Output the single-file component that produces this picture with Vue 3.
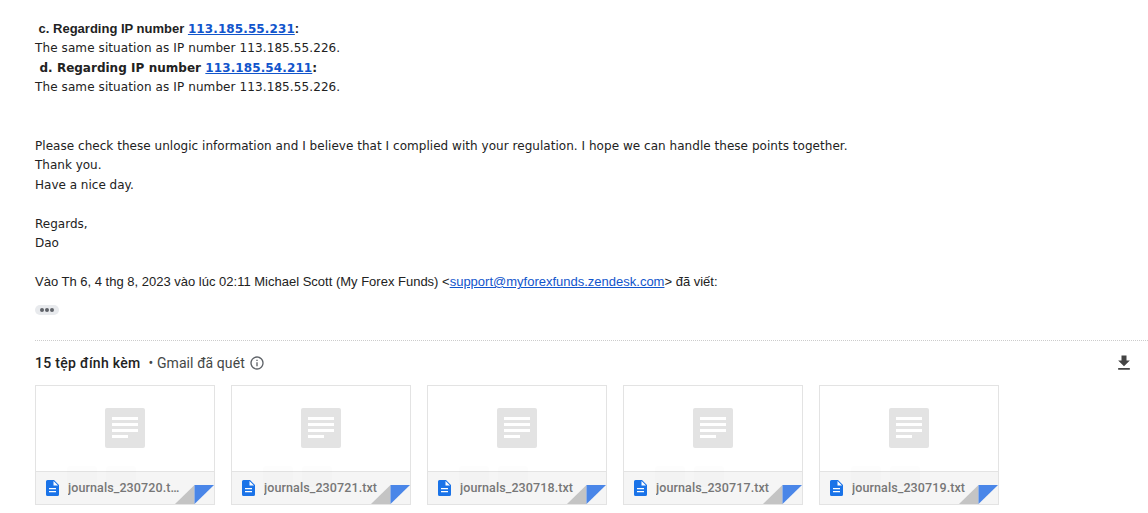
<script setup>
const files = [
  { name: 'journals_230720.txt', cut: true },
  { name: 'journals_230721.txt', cut: false },
  { name: 'journals_230718.txt', cut: false },
  { name: 'journals_230717.txt', cut: false },
  { name: 'journals_230719.txt', cut: false }
]
</script>

<template>
  <div class="page">
    <div class="mail">
      <div class="head-c">&nbsp;c. Regarding IP number <a class="ip" href="#">113.185.55.231</a>:</div>
      <div class="same">The same situation as IP number 113.185.55.226.</div>
      <div class="head-d">&nbsp;d. Regarding IP number <a class="ip" href="#">113.185.54.211</a>:</div>
      <div class="same">The same situation as IP number 113.185.55.226.</div>
      <div class="blank"></div>
      <div class="blank"></div>
      <div class="long">Please check these unlogic information and I believe that I complied with your regulation. I hope we can handle these points together.</div>
      <div>Thank you.</div>
      <div>Have a nice day.</div>
      <div class="blank"></div>
      <div>Regards,</div>
      <div>Dao</div>
    </div>
    <div class="quote">Vào Th 6, 4 thg 8, 2023 vào lúc 02:11 Michael Scott (My Forex Funds) &lt;<a href="#">support@myforexfunds.zendesk.com</a>&gt; đã viết:</div>
    <div class="dots"><i></i><i></i><i></i></div>
    <div class="divider"></div>
    <div class="att-head">
      <span class="count">15 tệp đính kèm</span>
      <span class="scan">•&nbsp;Gmail đã quét</span>
      <svg class="info" viewBox="0 0 24 24" width="16" height="16"><path fill="#5f6368" d="M11 7h2v2h-2zm0 4h2v6h-2zm1-9C6.48 2 2 6.48 2 12s4.48 10 10 10 10-4.48 10-10S17.52 2 12 2zm0 18c-4.41 0-8-3.59-8-8s3.59-8 8-8 8 3.59 8 8-3.59 8-8 8z"/></svg>
      <svg class="dl" viewBox="0 0 24 24" width="20" height="20"><path fill="#444" d="M19 9h-4V3H9v6H5l7 7 7-7zM5 18v2h14v-2H5z"/></svg>
    </div>
    <div class="chips">
      <div v-for="f in files" :key="f.name" class="chip">
        <div class="thumb">
          <svg viewBox="0 0 40 40" width="40" height="40">
            <rect width="40" height="40" rx="2" fill="#e3e3e3"/>
            <path fill="#fff" d="M7 9h26v3H7zM7 15h26v3H7zM7 21h26v3H7zM7 27h16v3H7z"/>
          </svg>
        </div>
        <div class="foot">
          <svg class="ficon" viewBox="0 0 13 16" width="13" height="16">
            <path fill="#1a73e8" d="M1.500 0H8l5 5v9.500a1.500 1.500 0 0 1-1.500 1.500h-10A1.500 1.500 0 0 1 0 14.500v-13A1.500 1.500 0 0 1 1.500 0z"/>
            <path fill="#fff" d="M3 8h7v1.200H3zM3 11h7v1.200H3zM7.500 1v4.500H12z" />
          </svg>
          <span class="name" :class="{ cut: f.cut }">{{ f.name }}</span>
          <svg class="corner" viewBox="0 0 40 20" width="39" height="19" preserveAspectRatio="none">
            <path fill="#c4c4c4" d="M0 20 L20 0 V20 Z"/>
            <path fill="#4a86e8" d="M20 0 H40 L20 20 Z"/>
          </svg>
        </div>
        <div class="ghosts"><span></span><span></span></div>
      </div>
    </div>
  </div>
</template>

<style scoped>
.page {
  width: 1148px;
  height: 513px;
  overflow: hidden;
  box-sizing: border-box;
  padding: 18.75px 0 0 35px;
  background: #fff;
  color: #222;
}
.mail {
  font-family: "DejaVu Sans", Verdana, sans-serif;
  font-size: 12px;
  line-height: 19.5px;
}
.blank { height: 19.5px; }
.same { letter-spacing: 0.1px; }
.long { letter-spacing: 0.037px; }
.head-c {
  font-family: "Liberation Sans", Arial, sans-serif;
  font-weight: 700;
  font-size: 13px;
}
.head-d { font-weight: 700; font-size: 12px; word-spacing: 0.2px; }
.ip {
  font-family: "DejaVu Sans", Verdana, sans-serif;
  color: #15c;
  text-decoration: underline;
  font-size: 12px;
  letter-spacing: 0.1px;
}
.quote {
  margin-top: 18.25px;
  font-family: "Liberation Sans", Arial, sans-serif;
  font-size: 13px;
  line-height: 20px;
}
.quote a { color: #15c; }
.dots {
  margin-top: 13px;
  width: 24px;
  height: 10px;
  border-radius: 5px;
  background: #e8eaed;
  display: flex;
  align-items: center;
  justify-content: center;
  gap: 1px;
}
.dots i {
  width: 4px;
  height: 4px;
  border-radius: 50%;
  background: #5f6368;
}
.divider {
  margin-top: 25px;
  width: 1113px;
  border-top: 1px dotted #ccc;
}
.att-head {
  display: flex;
  align-items: center;
  height: 22px;
  margin-top: 11px;
  width: 1099px;
  font-family: Roboto, "Liberation Sans", sans-serif;
  font-size: 14px;
  letter-spacing: 0.3px;
}
.count { font-weight: 500; color: #222; }
.scan { color: #444746; margin-left: 8px; letter-spacing: 0.08px; }
.info { margin-left: 4px; }
.dl { margin-left: auto; }
.chips {
  display: flex;
  gap: 16px;
  margin-top: 11px;
}
.chip {
  position: relative;
  width: 180px;
  height: 120px;
  box-sizing: border-box;
  border: 1px solid #e3e3e3;
  display: flex;
  flex-direction: column;
}
.thumb {
  flex: 1;
  display: flex;
  align-items: center;
  justify-content: center;
  padding-bottom: 1px;
}
.foot {
  height: 32px;
  flex: none;
  position: relative;
  background: #f5f5f5;
  border-top: 1px solid #e3e3e3;
  display: flex;
  align-items: center;
  padding-left: 10px;
  font-family: Roboto, "Liberation Sans", sans-serif;
  font-size: 12.5px;
  font-weight: 500;
  letter-spacing: 0.1px;
  color: #777;
}
.name {
  margin-left: 9px;
  margin-bottom: 2px;
  width: 118px;
  overflow: hidden;
  text-overflow: ellipsis;
  white-space: nowrap;
}
.name.cut { width: 112.8px; }
.corner { position: absolute; right: 0; bottom: 0; }
.ghosts {
  position: absolute;
  left: 31px;
  top: 80px;
  display: flex;
  gap: 9px;
  pointer-events: none;
}
.ghosts span {
  width: 30px;
  height: 21px;
  border-radius: 3px;
  background: rgba(120, 120, 120, 0.012);
}
</style>
